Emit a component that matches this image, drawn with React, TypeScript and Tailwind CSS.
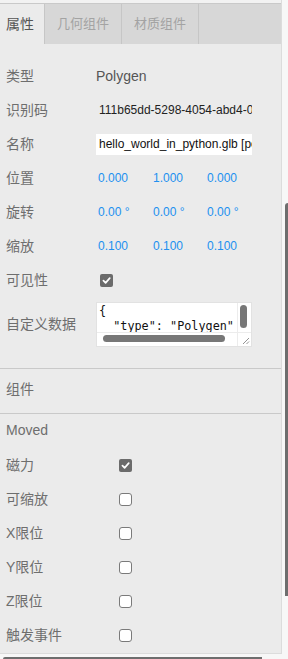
import React from "react";

const FONT = "font-['Liberation_Sans','Noto_Sans_CJK_SC',sans-serif]";

function CheckBox({ checked }: { checked: boolean }) {
  if (checked) {
    return (
      <span className="flex w-[13px] h-[13px] items-center justify-center rounded-[2px] bg-[#6b6b6b]">
        <svg width="9" height="9" viewBox="0 0 10 10">
          <path
            d="M1.6 5.2 L4 7.6 L8.6 2.4"
            fill="none"
            stroke="#fff"
            strokeWidth="1.9"
            strokeLinecap="round"
            strokeLinejoin="round"
          />
        </svg>
      </span>
    );
  }
  return (
    <span className="block w-[13px] h-[13px] rounded-[3px] border border-[#7a7a7a] bg-white" />
  );
}

function Row({ label, children }: { label: string; children: React.ReactNode }) {
  return (
    <div className="flex h-[34px] items-center">
      <div className="w-[96px] shrink-0 pl-[6px] text-[14px] text-[#6e6e6e]">{label}</div>
      <div className="flex flex-1 items-center">{children}</div>
    </div>
  );
}

function Vec({ values }: { values: string[] }) {
  return (
    <div className="flex text-[12px] text-[#2190f0]">
      <span className="w-[55px] pl-[2px]">{values[0]}</span>
      <span className="w-[54px] pl-[2px]">{values[1]}</span>
      <span className="w-[54px] pl-[2px]">{values[2]}</span>
    </div>
  );
}

function JsonBox() {
  return (
    <div className="relative w-[156px] h-[45px] overflow-hidden bg-white border border-[#e2e2e2]">
      <pre className="w-[140px] h-[30px] overflow-hidden pl-[2px] pt-[1px] font-['DejaVu_Sans_Mono',monospace] text-[11.8px] leading-[15px] text-[#111]">
        {'{\n  "type": "Polygen"'}
      </pre>
      {/* vertical scrollbar */}
      <div className="absolute right-0 top-0 w-[14px] h-[30px] border-l border-[#ececec]">
        <div className="ml-[2px] mt-[2px] w-[7px] h-[23px] rounded-full bg-[#777]" />
      </div>
      {/* horizontal scrollbar */}
      <div className="absolute left-0 bottom-0 w-[141px] h-[14px] border-t border-[#ececec]">
        <div className="ml-[6px] mt-[2px] w-[122px] h-[7px] rounded-full bg-[#777]" />
      </div>
      {/* resize grip */}
      <div className="absolute right-0 bottom-0 w-[14px] h-[14px] border-l border-t border-[#ececec]">
        <svg width="13" height="13" viewBox="0 0 13 13">
          <path d="M11 5 L5 11 M11 8.5 L8.5 11" stroke="#888" strokeWidth="0.9" />
        </svg>
      </div>
    </div>
  );
}

function CompRow({ label, checked }: { label: string; checked: boolean }) {
  return (
    <div className="flex h-[34px] items-center">
      <div className="w-[119px] shrink-0 pl-[6px] text-[14px] text-[#6e6e6e]">{label}</div>
      <CheckBox checked={checked} />
    </div>
  );
}

export default function App() {
  const flags: [string, boolean][] = [
    ["磁力", true],
    ["可缩放", false],
    ["X限位", false],
    ["Y限位", false],
    ["Z限位", false],
    ["触发事件", false],
  ];

  return (
    <div className={`relative w-[288px] h-[659px] overflow-hidden bg-[#f7f7f7] ${FONT}`}>
      <div className="flex w-[282px] h-[654px] flex-col bg-[#ebebeb] border-r border-b border-[#dcdcdc]">
        <div className="h-[3px] bg-[#f2f2f2]" />
        <div className="flex h-[41px] border-t border-[#c9c9c9] bg-[#d7d7d7] text-[13px]">
          <div className="flex w-[45px] items-center justify-center pr-[4px] bg-[#ebebeb] border-r border-[#c6c6c6] text-[#555] text-[14px]">
            属性
          </div>
          <div className="flex w-[77px] items-center justify-center border-r border-[#c6c6c6] text-[#a3a3a3]">
            几何组件
          </div>
          <div className="flex w-[77px] items-center justify-center border-r border-[#c6c6c6] text-[#a3a3a3]">
            材质组件
          </div>
        </div>

        <div className="pt-[15px] pb-[16px]">
          <Row label="类型">
            <span className="text-[14px] text-[#555]">Polygen</span>
          </Row>
          <Row label="识别码">
            <div className="w-[156px] overflow-hidden whitespace-nowrap pl-[3px] text-[12px] text-[#222]">
              111b65dd-5298-4054-abd4-0c3e7f21a9b6
            </div>
          </Row>
          <Row label="名称">
            <div className="flex w-[156px] h-[21px] items-center overflow-hidden whitespace-nowrap bg-white pl-[3px] text-[12px] text-[#111]">
              hello_world_in_python.glb [polygon]
            </div>
          </Row>
          <Row label="位置">
            <Vec values={["0.000", "1.000", "0.000"]} />
          </Row>
          <Row label="旋转">
            <Vec values={["0.00 °", "0.00 °", "0.00 °"]} />
          </Row>
          <Row label="缩放">
            <Vec values={["0.100", "0.100", "0.100"]} />
          </Row>
          <Row label="可见性">
            <span className="ml-[4px]">
              <CheckBox checked />
            </span>
          </Row>
          <div className="flex items-center py-[5px]">
            <div className="w-[96px] shrink-0 pl-[6px] text-[14px] text-[#6e6e6e]">自定义数据</div>
            <JsonBox />
          </div>
        </div>

        <div className="h-px bg-[#c9c9c9]" />
        <div className="pl-[6px] pt-[10px] pb-[14px] text-[14px] leading-[20px] text-[#6e6e6e]">组件</div>
        <div className="h-px bg-[#c9c9c9]" />
        <div className="pl-[6px] pt-[6px] pb-[8px] text-[14px] leading-[20px] text-[#6e6e6e]">Moved</div>
        {flags.map(([label, checked]) => (
          <CompRow key={label} label={label} checked={checked} />
        ))}
      </div>

      {/* page scrollbars */}
      <div className="absolute right-0 top-[203px] w-[3px] h-[393px] rounded-tl-[3px] bg-[#6e6e6e]" />
      <div className="absolute left-[3px] bottom-0 w-[259px] h-[2px] rounded-tl-[2px] bg-[#6e6e6e]" />
    </div>
  );
}
